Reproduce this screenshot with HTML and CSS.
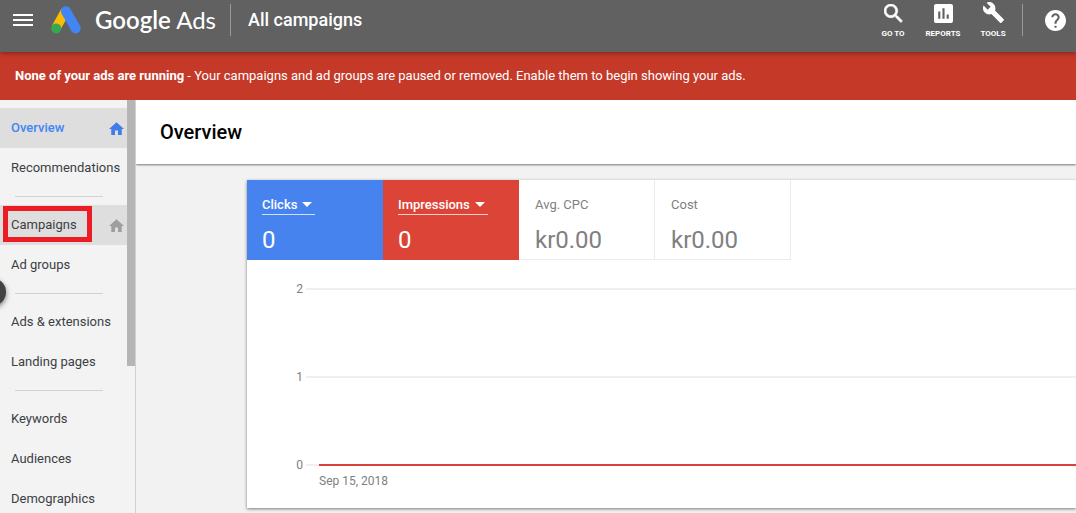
FILE: index.html
```html
<!DOCTYPE html>
<html lang="en">
<head>
<meta charset="utf-8">
<meta name="viewport" content="width=device-width, initial-scale=1">
<title>Google Ads - Overview</title>
<link rel="stylesheet" href="styles.css">
</head>
<body>
<svg class="defs" aria-hidden="true">
  <symbol id="home" viewBox="2 3 20 17"><path d="M10 20v-6h4v6h5v-8h3L12 3 2 12h3v8z"/></symbol>
</svg>
<div class="app">
  <header class="topbar">
    <button class="menu" aria-label="Main menu">
      <svg viewBox="0 0 20 12"><path d="M0 0h20v2H0zM0 5h20v2H0zM0 10h20v2H0z"/></svg>
    </button>
    <a class="brand" href="#">
      <svg class="logo" viewBox="0 0 30 28" aria-hidden="true">
        <path d="M14.500 5L5 22" stroke="#fbbc04" stroke-width="9.500"/>
        <path d="M15 5.200L24.800 22.400" stroke="#4285f4" stroke-width="10" stroke-linecap="round"/>
        <circle cx="5.200" cy="22.400" r="5" fill="#34a853"/>
      </svg>
      <span class="wordmark"><span class="google">Google</span> Ads</span>
    </a>
    <span class="rule"></span>
    <span class="scope">All campaigns</span>
    <div class="tools">
      <button class="tool">
        <svg viewBox="3 3 18 18"><path d="M15.500 14h-.79l-.28-.27A6.470 6.470 0 0 0 16 9.500 6.500 6.500 0 1 0 9.500 16c1.610 0 3.090-.59 4.230-1.570l.27.28v.79l5 4.990L20.490 19l-4.990-5zm-6 0C7.010 14 5 11.990 5 9.500S7.010 5 9.500 5 14 7.010 14 9.500 11.990 14 9.500 14z" stroke="currentColor" stroke-width=".6"/></svg>
        <span>GO TO</span>
      </button>
      <button class="tool">
        <svg viewBox="3 3 18 18"><path d="M19 3H5c-1.100 0-2 .9-2 2v14c0 1.100.9 2 2 2h14c1.100 0 2-.9 2-2V5c0-1.100-.9-2-2-2zM9 17H7v-7h2v7zm4 0h-2V7h2v10zm4 0h-2v-4h2v4z"/></svg>
        <span>REPORTS</span>
      </button>
      <button class="tool">
        <svg class="wrench" viewBox="0 1 24 22"><path d="M22.700 19l-9.100-9.100c.9-2.300.4-5-1.500-6.900-2-2-5-2.400-7.400-1.300L9 6 6 9 1.600 4.700C.4 7.100.9 10.100 2.900 12.100c1.900 1.900 4.600 2.400 6.900 1.500l9.100 9.100c.4.4 1 .4 1.400 0l2.300-2.300c.5-.4.5-1.100.1-1.400z"/></svg>
        <span>TOOLS</span>
      </button>
    </div>
    <span class="rule"></span>
    <button class="help" aria-label="Help">
      <svg viewBox="2 2 20 20"><path d="M12 2C6.480 2 2 6.480 2 12s4.480 10 10 10 10-4.480 10-10S17.520 2 12 2zm1 17h-2v-2h2v2zm2.070-7.750l-.9.920C13.450 12.900 13 13.500 13 15h-2v-.5c0-1.100.45-2.100 1.170-2.830l1.240-1.260c.37-.36.59-.86.59-1.410 0-1.100-.9-2-2-2s-2 .9-2 2H8c0-2.210 1.790-4 4-4s4 1.790 4 4c0 .88-.36 1.680-.93 2.250z"/></svg>
    </button>
  </header>

  <div class="alert" role="alert"><strong>None of your ads are running</strong> - Your campaigns and ad groups are paused or removed. Enable them to begin showing your ads.</div>

  <div class="body">
    <nav class="sidebar" aria-label="Pages">
      <a class="item active" href="#">Overview <svg><use href="#home"/></svg></a>
      <a class="item" href="#">Recommendations</a>
      <hr>
      <a class="item hover marked" href="#">Campaigns <svg><use href="#home"/></svg></a>
      <a class="item" href="#">Ad groups</a>
      <hr>
      <a class="item" href="#">Ads &amp; extensions</a>
      <a class="item" href="#">Landing pages</a>
      <hr>
      <a class="item" href="#">Keywords</a>
      <a class="item" href="#">Audiences</a>
      <a class="item" href="#">Demographics</a>
      <span class="thumb"></span>
      <button class="expander" aria-label="Expand navigation"></button>
    </nav>

    <main class="main">
      <h1 class="title">Overview</h1>
      <section class="card">
        <div class="metrics">
          <div class="metric blue"><button class="picker">Clicks<i class="caret"></i></button><span class="value">0</span></div>
          <div class="metric red"><button class="picker">Impressions<i class="caret"></i></button><span class="value">0</span></div>
          <div class="metric"><span class="name">Avg. CPC</span><span class="value">kr0.00</span></div>
          <div class="metric"><span class="name">Cost</span><span class="value">kr0.00</span></div>
        </div>
        <div class="chart">
          <div class="tick"><span>2</span><i class="grid"></i></div>
          <div class="tick"><span>1</span><i class="grid"></i></div>
          <div class="tick"><span>0</span><i class="grid zero"></i></div>
          <span class="date">Sep 15, 2018</span>
        </div>
      </section>
    </main>
  </div>
</div>
</body>
</html>
```
FILE: styles.css
```css
*, *::before, *::after { box-sizing: border-box; }
body { margin: 0; font: 13px/16px Roboto, sans-serif; color: #3c4043; }
button { border: 0; padding: 0; background: none; color: inherit; font: inherit; cursor: pointer; }
a { color: inherit; text-decoration: none; }
svg { display: block; fill: currentColor; }
.defs { display: none; }

.app { display: flex; flex-direction: column; height: 100vh; overflow: hidden; }

.topbar {
  position: relative; z-index: 2; flex: none;
  display: flex; align-items: center;
  height: 52px; padding: 0 10px 12px 13px;
  background: #616161; color: #fff;
  box-shadow: 0 1px 5px rgba(0, 0, 0, .4);
}
.menu svg { width: 20px; height: 12px; }
.brand { display: flex; align-items: center; gap: 14px; margin: 0 14px 0 18px; }
.logo { width: 30px; height: 28px; fill: none; }
.wordmark { font: 24px/32px Lato, sans-serif; white-space: nowrap; }
.google { font-weight: 600; }
.rule { width: 1px; height: 32px; background: #9a9a9a; }
.scope { margin-left: 17px; font-size: 18px; line-height: 24px; font-weight: 500; white-space: nowrap; }
.tools { display: flex; margin: 0 4px 0 auto; }
.tool {
  display: flex; flex-direction: column; align-items: center; justify-content: flex-end; gap: 6px;
  width: 50px; font-size: 8px; line-height: 10px; font-weight: 700;
}
.tool svg { width: 19px; height: 19px; }
.tool .wrench { width: 23px; height: 21px; }
.help { margin-left: 22px; }
.help svg { width: 21px; height: 21px; }

.alert { flex: none; padding: 16px 15px; background: #c53929; color: #fff; white-space: nowrap; }
.alert strong { font-weight: 700; }

.body { flex: 1; display: flex; min-height: 0; }
.sidebar {
  position: relative; flex: none; width: 136px; padding-top: 8px; overflow: hidden;
  background: #f3f3f3; border-right: 1px solid #d0d0d0;
}
.item { display: flex; align-items: center; justify-content: space-between; height: 40px; padding: 0 11px; white-space: nowrap; }
.item svg { width: 15px; height: 13px; color: #9e9e9e; }
.item.active { background: #dedede; color: #4285f4; font-weight: 500; }
.item.active svg { color: #3f7de8; }
.item.hover { position: relative; background: #dedede; }
.marked::after { content: ""; position: absolute; left: 3px; top: 1px; width: 89px; height: 36px; border: 5px solid #ed1c24; }
.sidebar hr { height: 1px; margin: 8px 32px 8px 15px; border: 0; background: #d2d2d2; }
.thumb { position: absolute; right: 0; top: 0; width: 8px; height: 266px; background: #b5b5b5; }
.expander { position: absolute; left: -22px; top: 178px; width: 28px; height: 28px; border-radius: 50%; background: #424242; box-shadow: 0 2px 5px rgba(0, 0, 0, .5); }

.main { flex: 1; min-width: 0; overflow: hidden; background: #f2f2f2; }
.title {
  margin: 0; padding: 20px 24px; background: #fff; color: #000;
  font-size: 20px; line-height: 24px; font-weight: 500; box-shadow: 0 1px 2px rgba(0, 0, 0, .5);
}
.card { margin: 16px 0 0 111px; background: #fff; box-shadow: 0 1px 3px rgba(0, 0, 0, .5); }
.metrics { display: flex; color: #808080; }
.metric {
  display: flex; flex-direction: column; align-items: flex-start; gap: 12px;
  width: 136px; height: 80px; padding: 16px 16px 0;
  border: solid #ebebeb; border-width: 0 1px 1px 0;
}
.blue, .red { padding-left: 15px; border: 0; color: #fff; }
.blue { background: #4683ef; }
.red { background: #db4437; }
.name, .picker { height: 19px; line-height: 17px; }
.picker { display: flex; align-items: center; gap: 5px; padding: 0 3px 1px 0; border-bottom: 1px solid rgba(255, 255, 255, .75); font-weight: 500; }
.caret { border: 5px solid transparent; border-top-color: #fff; border-bottom: 0; }
.value { font-size: 24px; line-height: 26px; }

.chart { display: flex; flex-direction: column; padding: 21px 0 19px 48px; font-size: 12px; color: #808080; }
.tick { display: flex; align-items: center; gap: 3px; height: 16px; margin-bottom: 72px; }
.tick span { width: 8px; text-align: right; }
.grid { flex: 1; height: 2px; background: #efefef; }
.tick:nth-child(3) { margin-bottom: 0; }
.zero { border-left: 13px solid #efefef; background: #d8423a; }
.date { padding-left: 24px; }
```
